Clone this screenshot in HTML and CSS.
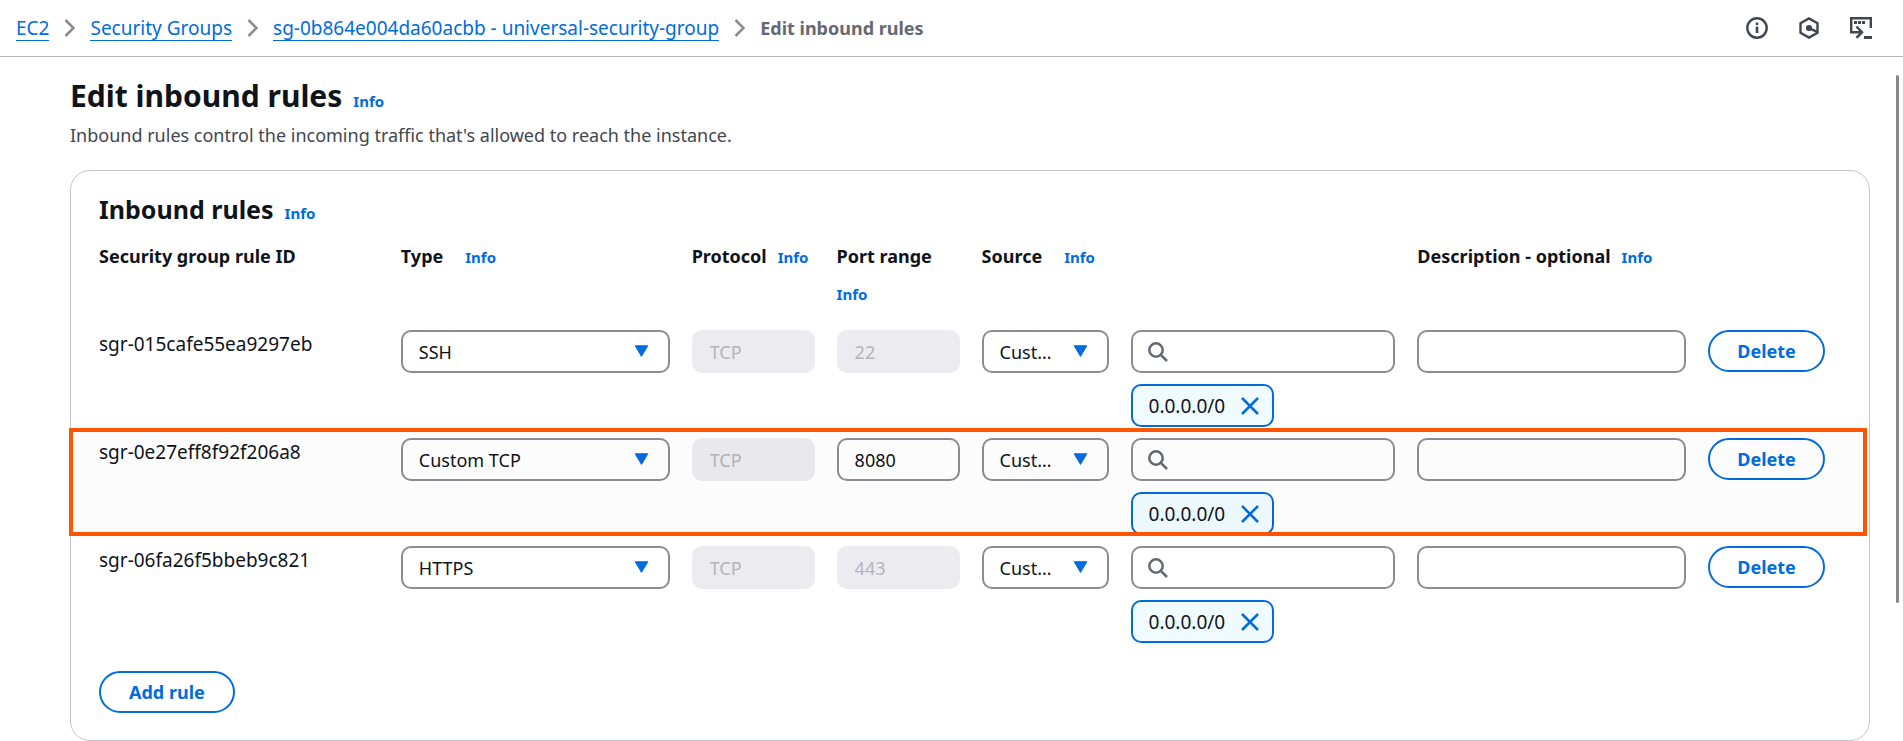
FILE: index.html
```html
<!DOCTYPE html>
<html lang="en">
<head>
<meta charset="utf-8">
<title>Edit inbound rules</title>
<link rel="stylesheet" href="styles.css">
</head>
<body>
<svg class="sprite" aria-hidden="true">
  <symbol id="chevron" viewBox="0 0 11 18"><path d="M1.500 1l8 8-8 8" fill="none" stroke="#8c8c94" stroke-width="2.600"/></symbol>
  <symbol id="caret" viewBox="0 0 15 12"><path d="M1.200.800h12.600L7.500 11.400z" fill="#006ce0" stroke="#006ce0" stroke-linejoin="round"/></symbol>
  <symbol id="search" viewBox="0 0 20 20"><circle cx="8" cy="8" r="6.700" fill="none" stroke="#656871" stroke-width="2.500"/><path d="M12.800 12.800l6.200 6.200" stroke="#656871" stroke-width="2.500"/></symbol>
  <symbol id="cross" viewBox="0 0 18 18"><path d="M1 1l16 16M17 1L1 17" stroke="#006ce0" stroke-width="2.500"/></symbol>
</svg>

<header class="topbar">
  <nav class="crumbs" aria-label="Breadcrumb">
    <a href="#">EC2</a>
    <svg class="chevron"><use href="#chevron"/></svg>
    <a href="#">Security Groups</a>
    <svg class="chevron"><use href="#chevron"/></svg>
    <a href="#">sg-0b864e004da60acbb - universal-security-group</a>
    <svg class="chevron"><use href="#chevron"/></svg>
    <span class="current" aria-current="page">Edit inbound rules</span>
  </nav>
  <div class="tools">
    <button class="tool" type="button" aria-label="Info panel">
      <svg viewBox="0 0 22 22"><circle cx="11" cy="11" r="9.700" fill="none" stroke="#424650" stroke-width="2.400"/><path d="M11 9.500v6.500M11 5.500v2.500" stroke="#424650" stroke-width="2.600"/></svg>
    </button>
    <button class="tool" type="button" aria-label="Diagnostics">
      <svg viewBox="0 0 22 22"><path d="M19.500 15.800V6.200L11 1.400 2.500 6.200v9.600L11 20.600z" fill="none" stroke="#424650" stroke-width="2.400"/><path d="M11 11l8.500 4.200" stroke="#424650" stroke-width="2.500"/><circle cx="11" cy="11" r="3.100" fill="#424650"/></svg>
    </button>
    <button class="tool" type="button" aria-label="CloudShell">
      <svg viewBox="0 0 22 22"><path d="M20.800 11V1.200H1.200v14H11" fill="none" stroke="#424650" stroke-width="2.400"/><path d="M6.500 9.500l5.500 5.700-5.500 5.700" fill="none" stroke="#424650" stroke-width="2.500"/><path d="M4 4h3v3H4zM8 4h3v3H8zM12 4h3v3h-3zM14 19h8v3h-8z" fill="#424650"/></svg>
    </button>
  </div>
</header>

<main class="page">
  <div class="heading">
    <h1>Edit inbound rules</h1>
    <a class="info" href="#">Info</a>
  </div>
  <p class="lead">Inbound rules control the incoming traffic that's allowed to reach the instance.</p>

  <section class="card">
    <div class="heading">
      <h2>Inbound rules</h2>
      <a class="info" href="#">Info</a>
    </div>
    <table class="rules">
      <colgroup>
        <col class="c-id"><col class="c-wide"><col class="c-small"><col class="c-small"><col class="c-source"><col class="c-search"><col class="c-wide"><col class="c-action">
      </colgroup>
      <thead>
        <tr>
          <th scope="col">Security group rule ID</th>
          <th scope="col"><span class="label spaced">Type <a class="info" href="#">Info</a></span></th>
          <th scope="col"><span class="label">Protocol <a class="info" href="#">Info</a></span></th>
          <th scope="col"><span class="label stacked">Port range <a class="info" href="#">Info</a></span></th>
          <th scope="col" colspan="2"><span class="label spaced">Source <a class="info" href="#">Info</a></span></th>
          <th scope="col"><span class="label">Description - optional <a class="info" href="#">Info</a></span></th>
          <td></td>
        </tr>
      </thead>
      <tbody>
        <tr>
          <td><span class="rule-id">sgr-015cafe55ea9297eb</span></td>
          <td><div class="select"><select aria-label="Type"><option>SSH</option></select><svg><use href="#caret"/></svg></div></td>
          <td><input class="field" aria-label="Protocol" value="TCP" disabled></td>
          <td><input class="field" aria-label="Port range" value="22" disabled></td>
          <td><div class="select"><select aria-label="Source type"><option>Custom</option></select><svg><use href="#caret"/></svg></div></td>
          <td>
            <div class="search"><svg><use href="#search"/></svg><input class="field" type="text" aria-label="Source"></div>
            <span class="chip">0.0.0.0/0<button type="button" aria-label="Remove 0.0.0.0/0"><svg><use href="#cross"/></svg></button></span>
          </td>
          <td><input class="field" aria-label="Description"></td>
          <td><button class="btn full" type="button">Delete</button></td>
        </tr>
        <tr class="highlight">
          <td><span class="rule-id">sgr-0e27eff8f92f206a8</span></td>
          <td><div class="select"><select aria-label="Type"><option>Custom TCP</option></select><svg><use href="#caret"/></svg></div></td>
          <td><input class="field" aria-label="Protocol" value="TCP" disabled></td>
          <td><input class="field" aria-label="Port range" value="8080"></td>
          <td><div class="select"><select aria-label="Source type"><option>Custom</option></select><svg><use href="#caret"/></svg></div></td>
          <td>
            <div class="search"><svg><use href="#search"/></svg><input class="field" type="text" aria-label="Source"></div>
            <span class="chip">0.0.0.0/0<button type="button" aria-label="Remove 0.0.0.0/0"><svg><use href="#cross"/></svg></button></span>
          </td>
          <td><input class="field" aria-label="Description"></td>
          <td><button class="btn full" type="button">Delete</button></td>
        </tr>
        <tr>
          <td><span class="rule-id">sgr-06fa26f5bbeb9c821</span></td>
          <td><div class="select"><select aria-label="Type"><option>HTTPS</option></select><svg><use href="#caret"/></svg></div></td>
          <td><input class="field" aria-label="Protocol" value="TCP" disabled></td>
          <td><input class="field" aria-label="Port range" value="443" disabled></td>
          <td><div class="select"><select aria-label="Source type"><option>Custom</option></select><svg><use href="#caret"/></svg></div></td>
          <td>
            <div class="search"><svg><use href="#search"/></svg><input class="field" type="text" aria-label="Source"></div>
            <span class="chip">0.0.0.0/0<button type="button" aria-label="Remove 0.0.0.0/0"><svg><use href="#cross"/></svg></button></span>
          </td>
          <td><input class="field" aria-label="Description"></td>
          <td><button class="btn full" type="button">Delete</button></td>
        </tr>
      </tbody>
    </table>
    <button class="btn" type="button">Add rule</button>
  </section>
</main>
<div class="scroll-thumb" aria-hidden="true"></div>
</body>
</html>
```
FILE: styles.css
```css
* { box-sizing: border-box; }

body {
  margin: 0;
  background: #fff;
  color: #0f141a;
  font: 18px/24px "Noto Sans", "Open Sans", sans-serif;
}

input, select, button { font: inherit; color: inherit; }

a { color: #006ce0; text-decoration: none; }

.sprite { display: none; }

/* Top bar */
.topbar {
  display: flex;
  justify-content: space-between;
  align-items: center;
  height: 57px;
  padding: 0 31px 0 16px;
  border-bottom: 1px solid #b4b4bb;
}

.crumbs { display: flex; align-items: center; gap: 15px; white-space: nowrap; }
.crumbs a { border-bottom: 1px solid #006ce0; font-size: 19px; }
.chevron { width: 11px; height: 18px; }
.current { color: #656871; font-weight: 700; }

.tools { display: flex; gap: 30px; }
.tool { padding: 0; border: 0; background: none; }
.tool svg { display: block; width: 22px; height: 22px; }

/* Page */
.page { padding: 19px 33px 0 70px; }

.heading { display: flex; align-items: baseline; gap: 11px; }
h1, h2 { margin: 0; font-weight: 700; }
h1 { font-size: 30px; line-height: 40px; }
h2 { font-size: 25px; line-height: 32px; }
.info { font-size: 15px; font-weight: 700; }

.lead { margin: 7px 0 23px; color: #424650; }

.card {
  padding: 22px 44px 27px 28px;
  border: 1px solid #c6c6cd;
  border-radius: 20px;
}

/* Rules table */
.rules {
  width: 100%;
  margin: 19px 0 17px;
  table-layout: fixed;
  border-collapse: collapse;
}
.c-id { width: 17.49%; }
.c-wide { width: 16.85%; }
.c-small { width: 8.4%; }
.c-source { width: 8.63%; }
.c-search { width: 16.62%; }
.c-action { width: 6.77%; }

.rules th, .rules td { padding: 0 22px 0 0; vertical-align: top; text-align: left; }
.rules td:last-child { padding-right: 0; }
.rules th { height: 86px; white-space: nowrap; }
.rules tbody tr { position: relative; height: 108px; }

.label { display: flex; align-items: baseline; gap: 11px; }
.label.spaced { gap: 22px; }
.label.stacked { flex-direction: column; gap: 14px; }

.rule-id { display: block; padding-top: 2px; font-size: 19px; }

.field, .select select {
  display: block;
  width: 100%;
  height: 43px;
  padding: 0 16px;
  border: 2px solid #8c8c94;
  border-radius: 10px;
  background: #fff;
  outline: 0;
}
.field:disabled { border-color: #ebebf0; background: #ebebf0; color: #b4b4bb; }

.select, .search { position: relative; }
.select select { appearance: none; padding-right: 48px; text-overflow: ellipsis; }
.select svg { position: absolute; top: 15px; right: 21px; width: 15px; height: 12px; pointer-events: none; }
.search svg { position: absolute; top: 12px; left: 17px; width: 20px; height: 20px; }
.search .field { padding-left: 46px; }

.chip {
  display: inline-flex;
  align-items: center;
  gap: 16px;
  height: 43px;
  margin-top: 11px;
  padding: 0 13px 0 16px;
  border: 2px solid #006ce0;
  border-radius: 10px;
  background: #f0fbff;
  font-size: 19px;
}
.chip button { padding: 0; border: 0; background: none; }
.chip svg { display: block; width: 18px; height: 18px; }

.btn {
  height: 42px;
  padding: 0 28px;
  border: 2px solid #006ce0;
  border-radius: 21px;
  background: #fff;
  color: #006ce0;
  font-weight: 700;
}
.btn.full { width: 100%; padding: 0; }

/* Marker frame drawn over the row */
.highlight::after {
  content: "";
  position: absolute;
  inset: -10px -42px 10px -30px;
  border: 4px solid #ff5500;
  background: rgba(0, 0, 0, 0.01);
  pointer-events: none;
}

.scroll-thumb {
  position: fixed;
  top: 75px;
  right: 4px;
  width: 3px;
  height: 528px;
  border-radius: 2px;
  background: #878787;
}
```
